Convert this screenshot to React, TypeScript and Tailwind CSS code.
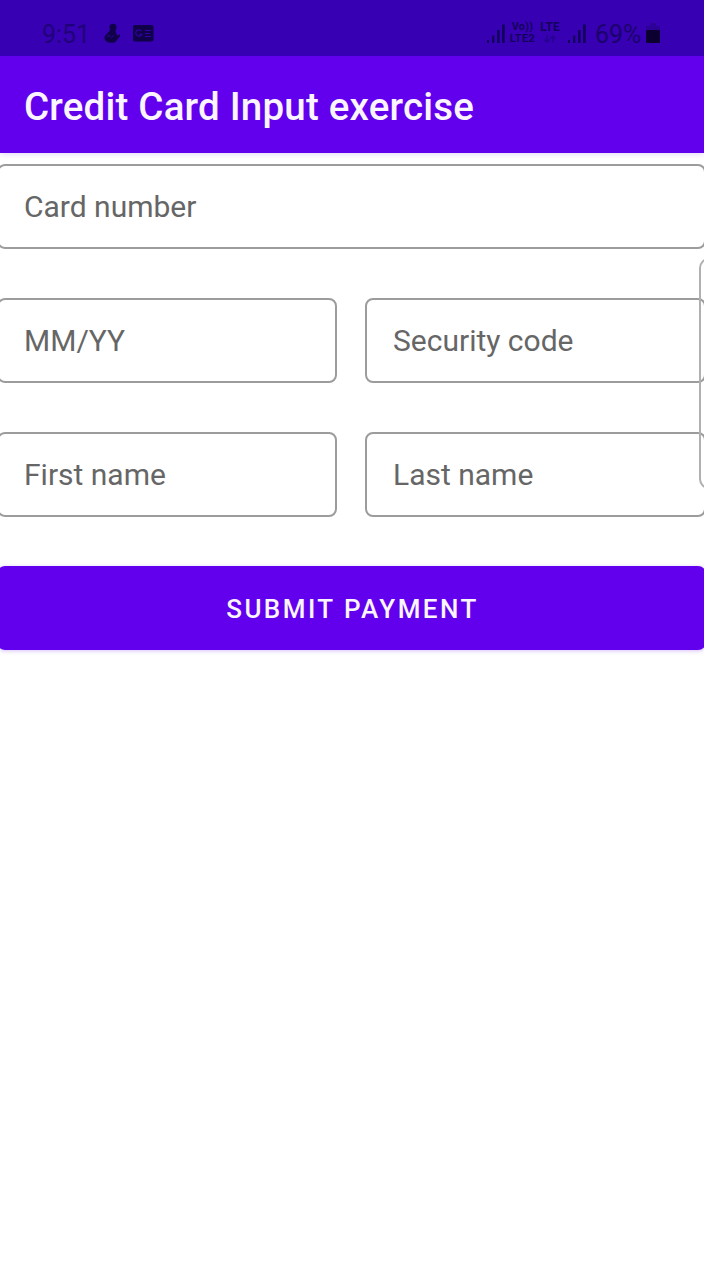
import React from "react";

function SignalBars() {
  return (
    <svg className="h-[20px] w-[19px] shrink-0" viewBox="0 0 19 20" fill="currentColor">
      <rect x="0" y="16" width="2" height="3" />
      <rect x="5" y="11.5" width="2.3" height="7.5" />
      <rect x="10" y="6" width="2.6" height="13" />
      <rect x="15" y="0.5" width="2.8" height="18.5" />
    </svg>
  );
}

function StatusBar() {
  return (
    <header className="flex h-14 items-start bg-[#3700b3] pr-[44px] pl-[42px] text-[#13005c]">
      <span className="mt-[20px] w-[61px] text-[25px] leading-[30px] text-[#200078]">9:51</span>
      <svg className="mt-[23px] h-[21px] w-[19px]" viewBox="0 0 19 21" fill="#10004a">
        <circle cx="10" cy="4.3" r="3.6" />
        <path d="M7 6.500h5.500c-.2 2.500 1.300 4 1.500 6 1.300.1 2.200-1 3-1.500.8 3-2 4.200-3 6-1.200 2.200-2.500 2.800-5 2.800-4 0-7.500-1.300-7.500-5 0-3.500 4.500-4.500 5.500-8.300Z" />
        <path d="M4 13.500c1.500-1.300 3-1 3.500.5M8.500 14.500l2-2.200" fill="none" stroke="#3700b3" strokeWidth="0.8" />
      </svg>
      <svg className="mt-[25px] ml-[11px] h-[17px] w-[21px]" viewBox="0 0 21 17">
        <rect x="0" y="0" width="20.5" height="16.5" rx="2" fill="#10004a" />
        <path d="M8.500 6.100a3.200 3.200 0 1 0 .3 3.300H6.300M12 5.500h6M12 8.500h5M12 11.500h6" fill="none" stroke="#3200a4" strokeWidth="1.200" />
      </svg>
      <div className="mt-[24px] ml-auto flex items-start">
        <SignalBars />
        <div className="ml-[2px] flex w-[29px] flex-col items-center text-[11px] font-bold whitespace-nowrap">
          <span className="-mt-[3px] leading-[12px] tracking-[0.2px]">Vo))</span>
          <span className="leading-[12px] tracking-[0.4px]">LTE2</span>
        </div>
        <div className="ml-[2px] w-[22px] text-center text-[12px] leading-[11px] font-bold">
          <div className="-mt-[2px]">LTE</div>
          <svg className="mx-auto mt-[2px] h-[8px] w-[14px]" viewBox="0 0 14 8" fill="none" stroke="#270090" strokeWidth="1.500">
            <path d="M4 0v7M1.500 4.500 4 7l2.500-2.500M10 8V1M7.500 3.500 10 1l2.500 2.500" />
          </svg>
        </div>
        <div className="ml-[7px]"><SignalBars /></div>
        <span className="-mt-[4px] ml-[8px] w-[50px] text-[25px] leading-[30px] whitespace-nowrap text-[#1b006c]">69%</span>
        <svg className="-mt-[1px] ml-[1px] h-[21px] w-[14px]" viewBox="0 0 14 21">
          <path d="M4 0h6v3h4v4H0V3h4Z" fill="#2d0098" />
          <rect x="0" y="7" width="14" height="13" rx="1" fill="#0b0030" />
        </svg>
      </div>
    </header>
  );
}

function Field({ label, inset = "pl-[25px]" }: { label: string; inset?: string }) {
  return (
    <label className={`flex h-[85px] items-center rounded-[8px] border-2 border-[#9c9c9c] pt-px ${inset}`}>
      <input
        aria-label={label}
        placeholder={label}
        className="w-full bg-transparent text-[30px] leading-[36px] text-[#666] outline-none placeholder:text-[#666]"
      />
    </label>
  );
}

export default function App() {
  return (
    <div className="relative h-[1280px] w-[704px] overflow-hidden bg-white font-['Roboto',sans-serif]">
      <StatusBar />
      <div className="flex h-[97px] items-center bg-[#6200ee] pt-1 pl-6 shadow-[0_1px_6px_rgba(98,0,238,0.18)]">
        <h1 className="text-[38.500px] leading-[48px] font-medium tracking-[0.2px] whitespace-nowrap text-[#fbf5ff]">Credit Card Input exercise</h1>
      </div>
      <form className="-mr-[2px] -ml-[3px] mt-[11px] flex flex-col gap-[49px]" onSubmit={(e) => e.preventDefault()}>
        <Field label="Card number" />
        <div className="grid grid-cols-[340px_341px] gap-[28px]">
          <Field label="MM/YY" />
          <Field label="Security code" inset="pl-[26px]" />
        </div>
        <div className="grid grid-cols-[340px_341px] gap-[28px]">
          <Field label="First name" />
          <Field label="Last name" inset="pl-[26px]" />
        </div>
        <button className="h-[84px] rounded-[8px] bg-[#6200ee] pt-[3px] pl-[2px] text-[26px] font-medium tracking-[2.450px] text-[#fbf5ff] shadow-[0_1px_4px_rgba(98,0,238,0.25)]">
          SUBMIT PAYMENT
        </button>
      </form>
      <div className="absolute top-[258px] left-[699px] h-[231px] w-[20px] rounded-[10px] border-2 border-[#b0b0b0]" />
    </div>
  );
}
